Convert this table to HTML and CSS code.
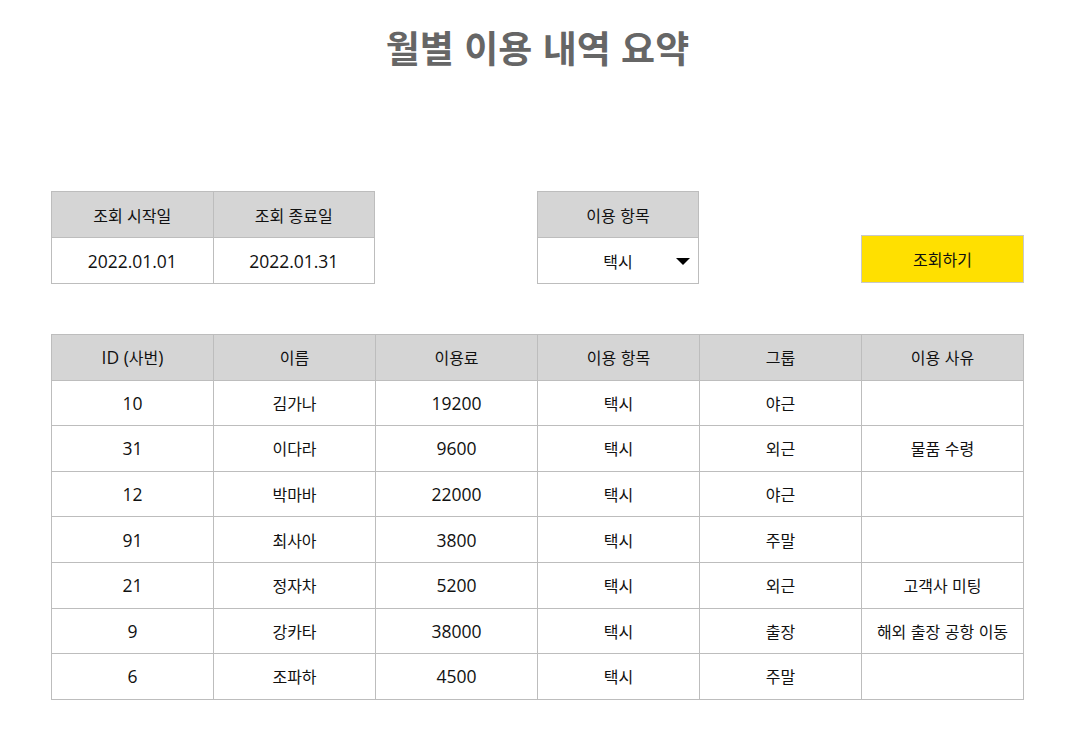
FILE: index.html
```html
<!DOCTYPE html>
<html lang="ko">
<head>
<meta charset="utf-8">
<link rel="stylesheet" href="styles.css">
</head>
<body>
<div class="page">
  <h1 class="title">월별 이용 내역 요약</h1>
  <div class="filters">
    <table class="grid dates">
      <tr><th>조회 시작일</th><th>조회 종료일</th></tr>
      <tr><td><span class="n">2022.01.01</span></td><td><span class="n">2022.01.31</span></td></tr>
    </table>
    <table class="grid kind">
      <tr><th>이용 항목</th></tr>
      <tr><td class="select">택시<span class="arrow"></span></td></tr>
    </table>
    <button class="search">조회하기</button>
  </div>
  <table class="grid list">
    <tr><th><span class="n">ID (</span>사번<span class="n">)</span></th><th>이름</th><th>이용료</th><th>이용 항목</th><th>그룹</th><th>이용 사유</th></tr>
    <tr><td><span class="n">10</span></td><td>김가나</td><td><span class="n">19200</span></td><td>택시</td><td>야근</td><td></td></tr>
    <tr><td><span class="n">31</span></td><td>이다라</td><td><span class="n">9600</span></td><td>택시</td><td>외근</td><td>물품 수령</td></tr>
    <tr><td><span class="n">12</span></td><td>박마바</td><td><span class="n">22000</span></td><td>택시</td><td>야근</td><td></td></tr>
    <tr><td><span class="n">91</span></td><td>최사아</td><td><span class="n">3800</span></td><td>택시</td><td>주말</td><td></td></tr>
    <tr><td><span class="n">21</span></td><td>정자차</td><td><span class="n">5200</span></td><td>택시</td><td>외근</td><td>고객사 미팅</td></tr>
    <tr><td><span class="n">9</span></td><td>강카타</td><td><span class="n">38000</span></td><td>택시</td><td>출장</td><td>해외 출장 공항 이동</td></tr>
    <tr><td><span class="n">6</span></td><td>조파하</td><td><span class="n">4500</span></td><td>택시</td><td>주말</td><td></td></tr>
  </table>
</div>
</body>
</html>
```
FILE: styles.css
```css
html, body {
  margin: 0;
  padding: 0;
  background: #fff;
}
body {
  font-family: "Noto Sans CJK KR", "Noto Sans", sans-serif;
  color: #111;
  font-size: 16px;
}
.page {
  width: 973px;
  margin: 0 auto;
}
.title {
  margin: 22px 0 0;
  text-align: center;
  font-size: 37px;
  line-height: 50px;
  font-weight: 700;
  color: #666;
}
.filters {
  margin-top: 119px;
  display: grid;
  grid-template-columns: repeat(6, 162px);
  align-items: end;
}
.grid {
  border-collapse: collapse;
  table-layout: fixed;
}
.grid th, .grid td {
  border: 1px solid #bdbdbd;
  padding: 0;
  text-align: center;
  vertical-align: middle;
  font-weight: 400;
  font-size: 16px;
  width: 161px;
  line-height: 20px;
}
.grid th {
  background: #d5d5d5;
}
.n {
  font-family: "Open Sans", "Noto Sans", sans-serif;
  font-size: 17.5px;
  line-height: 20px;
}
.dates {
  grid-column: 1 / span 2;
}
.dates th, .dates td, .kind th, .kind td {
  height: 45px;
}
.kind {
  grid-column: 4;
}
.select {
  position: relative;
}
.arrow {
  position: absolute;
  right: 8px;
  top: 20px;
  width: 0;
  height: 0;
  border-left: 7px solid transparent;
  border-right: 7px solid transparent;
  border-top: 7px solid #000;
}
.search {
  grid-column: 6;
  width: 163px;
  height: 48px;
  margin-bottom: 1px;
  background: #ffe000;
  border: 1px solid #c8c8c8;
  font-family: inherit;
  font-size: 16px;
  color: #111;
  padding: 0;
}
.list {
  margin-top: 50px;
  width: 973px;
}
.list th, .list td {
  height: 44.6px;
}
```
